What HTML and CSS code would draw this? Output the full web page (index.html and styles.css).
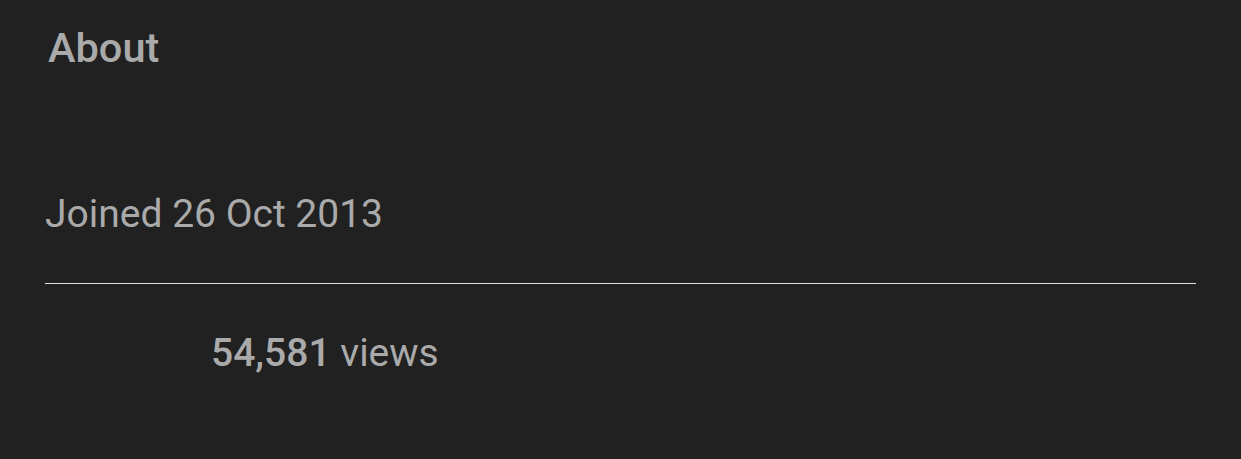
FILE: index.html
```html
<!DOCTYPE html>
<html lang="en">
<head>
  <meta charset="UTF-8" />
  <meta name="viewport" content="width=device-width, initial-scale=1.0"/>
  <title>About</title>
  <link rel="stylesheet" href="styles.css">
</head>
<body>
  <div class="about">
    <h2 class="about-title">About</h2>

    <div class="about-joined">Joined 26 Oct 2013</div>

    <div class="about-stats">
      <span class="about-count">54,581</span> views
    </div>
  </div>
</body>
</html>
```

FILE: styles.css
```css
body {
  font-family: Roboto, "Noto Sans", Arial, sans-serif;
  background-color: #212121;
  color: #aaaaaa;
  margin: 0;
  padding: 0;
}

.about {
  padding: 0 45px;
}

.about-title {
  margin: 0;
  padding: 24px 0 0 3px;
  font-size: 41.5px;
  font-weight: 500;
  line-height: 48px;
}

.about-joined {
  margin-top: 120px;
  font-size: 39px;
  line-height: 44px;
  padding-bottom: 47px;
  border-bottom: 1px solid #e0e0e0;
}

.about-stats {
  padding: 47px 0 0 166px;
  font-size: 39px;
  line-height: 44px;
}

.about-count {
  font-weight: 500;
}
```
